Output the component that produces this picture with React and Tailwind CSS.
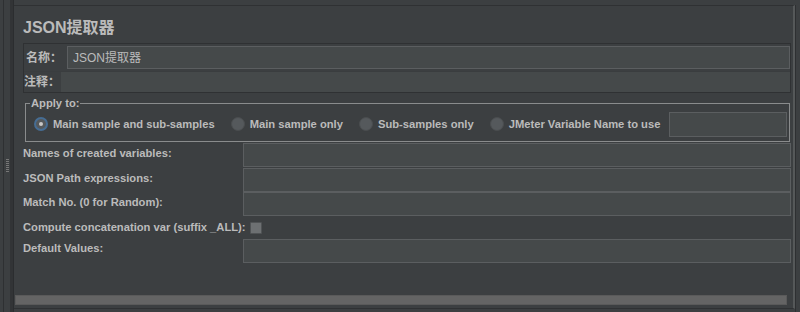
import React from 'react';

const font = { fontFamily: '"Liberation Sans", "Noto Sans CJK SC", sans-serif' };

const Field = ({ className = '' }) => (
  <div className={`h-[24px] bg-[#45494a] border border-[#5b5e60] ${className}`} />
);

const Radio = ({ checked, label }) => (
  <div className="flex items-center gap-[5px] whitespace-nowrap">
    {checked ? (
      <span className="w-[14px] h-[14px] rounded-full border-2 border-[#466d94] bg-[#55595c] flex items-center justify-center">
        <span className="w-[4px] h-[4px] rounded-full bg-[#c8c8c8]" />
      </span>
    ) : (
      <span className="w-[14px] h-[14px] rounded-full bg-[#55595c] border border-[#4a4d4f]" />
    )}
    <span>{label}</span>
  </div>
);

const rows = [
  { label: 'Names of created variables:' },
  { label: 'JSON Path expressions:' },
  { label: 'Match No. (0 for Random):' },
];

const App = () => {
  return (
    <div
      className="w-[800px] h-[312px] bg-[#3c3f41] flex text-[11.2px] font-bold text-[#bbbbbb] overflow-hidden whitespace-nowrap"
      style={font}
    >
      {/* left splitter */}
      <div className="w-[3px]" />
      <div className="w-[1px] bg-[#2e3032]" />
      <div className="w-[6px] flex items-center justify-center pt-[20px]">
        <div className="w-[3px] h-[14px] bg-[repeating-linear-gradient(to_bottom,#777_0px,#777_1px,transparent_1px,transparent_2px)]" />
      </div>
      <div className="w-[3px] bg-[#323436]" />
      <div className="w-[1px] bg-[#2b2d2f]" />

      {/* main panel */}
      <div className="flex-1 flex flex-col mt-[5px] mb-[3px] border-t border-b border-[#2f3133] border-r-2 border-r-[#555859]">
        <div className="flex-1 flex flex-col pl-[9px] pr-[2px]">
          <div className="text-[16px] h-[37px] pt-[12px] leading-[20px] text-[#bbbbbb]">JSON提取器</div>

          <div className="border border-[#2f3133] flex flex-col">
            <div className="flex items-center h-[27px] pl-[2px]">
              <span className="w-[41px] text-[12px]">名称：</span>
              <div className="flex-1 h-[23px] bg-[#45494a] border border-[#5b5e60] flex items-center pl-[5px] font-normal text-[12px] text-[#bbbbbb]">
                JSON提取器
              </div>
            </div>
            <div className="flex items-center h-[21px] border-t border-[#3a3d3f]">
              <span className="w-[37px] text-[12px]">注释：</span>
              <div className="flex-1 h-[20px] bg-[#45494a]" />
            </div>
          </div>

          <fieldset className="mt-[4px] ml-[2px] mr-[1px] border border-[#8a8c8d] h-[45px] pl-[8px] pr-[2px] pt-[3px] m-0">
            <legend className="px-[1px] -ml-[4px] leading-[12px]">Apply to:</legend>
            <div className="flex items-center">
              <div className="flex items-center gap-[16px]">
                <Radio checked label="Main sample and sub-samples" />
                <Radio label="Main sample only" />
                <Radio label="Sub-samples only" />
                <Radio label="JMeter Variable Name to use" />
              </div>
              <div className="flex-1" />
              <Field className="w-[118px] h-[25px]" />
            </div>
          </fieldset>

          <div className="flex flex-col mt-[1px]">
            {rows.map((r) => (
              <div key={r.label} className="flex items-start h-[24.5px]">
                <span className="w-[220px] pt-[3px] leading-[14px]">{r.label}</span>
                <Field className="flex-1" />
              </div>
            ))}
            <div className="flex items-center h-[22px]">
              <span>Compute concatenation var (suffix _ALL):</span>
              <span className="ml-[4px] mt-[1px] w-[12px] h-[12px] bg-[#6d7072] border border-[#505355] rounded-[1px]" />
            </div>
            <div className="flex items-start h-[25px]">
              <span className="w-[220px] pt-[2px] leading-[14px]">Default Values:</span>
              <Field className="flex-1" />
            </div>
          </div>
          <div className="flex-1" />
        </div>
        {/* horizontal scrollbar */}
        <div className="h-[12px] pl-[1px] pr-[6px] mb-[1px]">
          <div className="h-[10px] bg-[#646464] border border-[#5a5a5a]" />
        </div>
      </div>
      <div className="w-[5px] flex">
        <div className="w-[1px] bg-[#2e3032] mt-[5px]" />
      </div>
    </div>
  );
};

export default App;
